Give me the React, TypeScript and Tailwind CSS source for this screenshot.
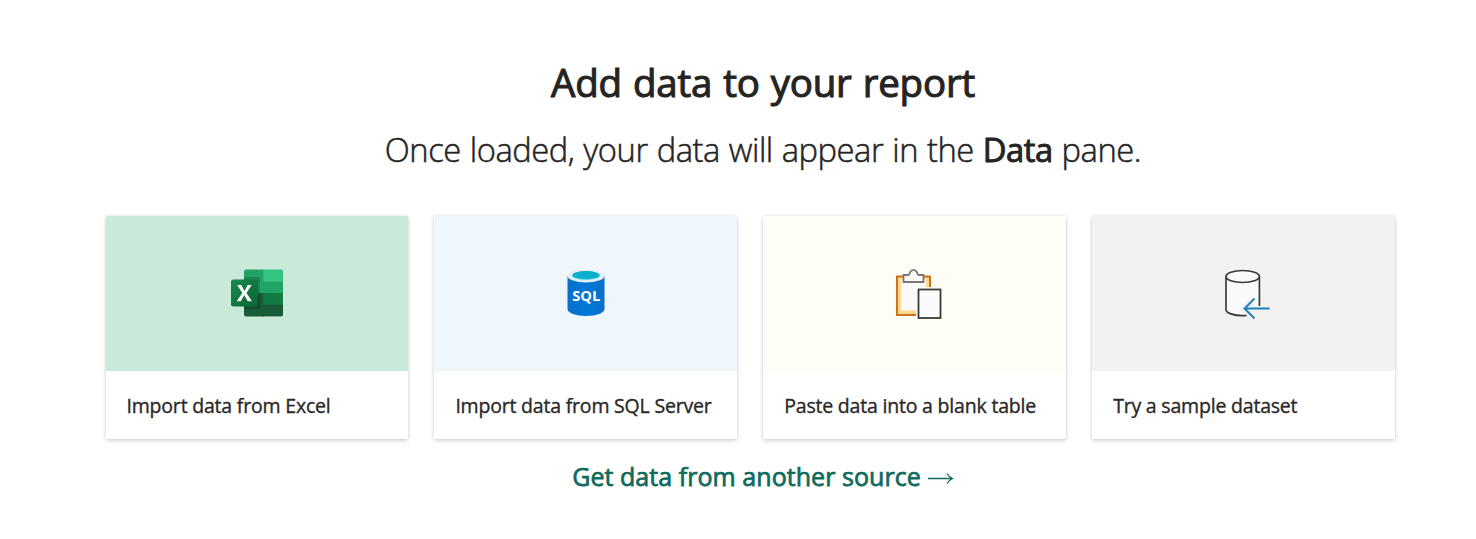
import type { ReactNode } from "react";

function ExcelIcon() {
  return (
    <svg width="54" height="48" viewBox="0 0 54 48" className="block">
      <defs>
        <clipPath id="sheet">
          <rect x="14" y="0.5" width="39" height="47" rx="2" />
        </clipPath>
        <linearGradient id="badge" x1="0" y1="0" x2="1" y2="1">
          <stop offset="0" stopColor="#18884f" />
          <stop offset="1" stopColor="#0b6631" />
        </linearGradient>
      </defs>
      <g clipPath="url(#sheet)">
        <rect x="14" y="0" width="20" height="24" fill="#21a366" />
        <rect x="33.3" y="0" width="20" height="12.5" fill="#33c481" />
        <rect x="33.3" y="12.3" width="20" height="12" fill="#21a366" />
        <rect x="14" y="24" width="20" height="24" fill="#185c37" />
        <rect x="33.3" y="24" width="20" height="12" fill="#107c41" />
        <rect x="33.3" y="35.8" width="20" height="12" fill="#185c37" />
        <path d="M14 8H27.5Q30 8 30 10.500V37.500Q30 40 27.500 40H14Z" fill="#000" opacity=".18" />
      </g>
      <rect x="1" y="10.500" width="27" height="27" rx="2" fill="url(#badge)" />
      <path
        d="M6.700 32.200L12.300 24L7.200 16.100H11.300L14.500 21.900L17.700 16.100H21.600L16.500 24.100L21.900 32.200H17.800L14.200 26.200L10.700 32.200Z"
        fill="#fff"
      />
    </svg>
  );
}

function SqlIcon() {
  return (
    <svg width="38" height="48" viewBox="0 0 38 48" className="block">
      <defs>
        <linearGradient id="drum" x1="0" x2="1">
          <stop offset="0" stopColor="#0a6fcb" />
          <stop offset=".5" stopColor="#0078d7" />
          <stop offset="1" stopColor="#0a6fcb" />
        </linearGradient>
      </defs>
      <path d="M0.500 7V40C0.500 44 8.800 47 19 47S37.500 44 37.500 40V7Z" fill="url(#drum)" />
      <ellipse cx="19" cy="7" rx="18.500" ry="6.500" fill="#e4eef8" />
      <ellipse cx="19" cy="6.500" rx="14" ry="4.300" fill="#32d4e8" />
      <ellipse cx="19" cy="6" rx="13.300" ry="3.900" fill="#0bafcb" />
      <text
        x="19.300"
        y="32"
        textAnchor="middle"
        textLength="28"
        lengthAdjust="spacingAndGlyphs"
        fill="#fff"
        className="font-['Open_Sans',sans-serif] text-[15px] font-bold"
      >
        SQL
      </text>
    </svg>
  );
}

function PasteIcon() {
  return (
    <svg width="48" height="52" viewBox="0 0 48 52" className="block">
      <rect x="2" y="8.500" width="33" height="38.500" fill="#fcd98f" stroke="#d2701b" strokeWidth="2" />
      <rect x="6" y="11" width="25" height="31.500" fill="#fafafa" />
      <path
        d="M8.500 14V7H13.500C14.500 7 14.500 5.500 15 4.300C16 2.500 17 1.900 18.500 1.900S21 2.500 22 4.300C22.500 5.500 22.500 7 23.500 7H28.500V14Z"
        fill="#fafafa"
        stroke="#797774"
        strokeWidth="1.800"
      />
      <rect x="21" y="19" width="27" height="33" fill="#fefef7" />
      <rect x="23.500" y="21.500" width="22" height="28.500" fill="#fafafa" stroke="#3a3b3a" strokeWidth="1.800" />
    </svg>
  );
}

function SampleIcon() {
  return (
    <svg width="46" height="51" viewBox="0 0 46 51" fill="none" className="block">
      <path d="M1 7.500V41C1 44 7.500 47 17.500 47L20.500 46.900L15 40L23 30L34.500 37V7.500Z" fill="#fafafa" />
      <ellipse cx="17.700" cy="7.500" rx="16.700" ry="6" fill="#fafafa" stroke="#3a3a38" strokeWidth="1.700" />
      <path
        d="M1 7.500V40.500C1 44 8.500 46.700 17.500 46.700Q19.700 46.700 21.500 46.500M34.400 7.500V37"
        stroke="#3a3a38"
        strokeWidth="1.700"
      />
      <path d="M44.500 39.500H20M29.500 29.500L19.500 39.500L29.500 49.500" stroke="#1e80b8" strokeWidth="1.900" />
    </svg>
  );
}

type CardProps = { label: string; tint: string; children: ReactNode };

function SourceCard({ label, tint, children }: CardProps) {
  return (
    <button
      type="button"
      className="flex h-[223px] flex-col overflow-hidden rounded-[1px] bg-white text-left shadow-[0_2px_4px_rgba(0,0,0,0.14),0_0_3px_rgba(0,0,0,0.12)]"
    >
      <div className={`h-[154.500px] w-full shrink-0 ${tint}`}>{children}</div>
      <div className="flex w-full flex-1 items-center pt-px pl-[21px] text-[19.500px] tracking-[-0.2px] whitespace-nowrap text-[#292827] [-webkit-text-stroke:0.35px_currentColor]">
        {label}
      </div>
    </button>
  );
}

export default function App() {
  return (
    <main className="flex h-[539px] w-[1476px] flex-col overflow-hidden bg-white pt-[56px] font-['Open_Sans','Noto_Sans',sans-serif] text-[#252423]">
      <header className="ml-[50px] flex flex-col items-center whitespace-nowrap">
        <h1 className="text-[38.500px] leading-[52px] font-normal tracking-[-0.200px] [word-spacing:1.200px] [-webkit-text-stroke:1.050px_currentColor]">
          Add data to your report
        </h1>
        <p className="mt-[19px] text-[32.700px] leading-[46px] font-light tracking-[-0.450px] [word-spacing:0.900px] [-webkit-text-stroke:0.500px_currentColor]">
          Once loaded, your data will appear in the{" "}
          <b className="font-normal [-webkit-text-stroke:0.950px_currentColor]">Data</b> pane.
        </p>
      </header>
      <section className="mt-[43px] ml-[105.500px] grid w-[1289.500px] grid-cols-4 gap-[26px]">
        <SourceCard label="Import data from Excel" tint="bg-[#c9ead8] pt-[52.500px] pl-[124.500px]">
          <ExcelIcon />
        </SourceCard>
        <SourceCard label="Import data from SQL Server" tint="bg-[#eff6fc] pt-[52.500px] pl-[132.700px]">
          <SqlIcon />
        </SourceCard>
        <SourceCard label="Paste data into a blank table" tint="bg-[#fefef6] pt-[52px] pl-[131.500px]">
          <PasteIcon />
        </SourceCard>
        <SourceCard label="Try a sample dataset" tint="bg-[#f3f2f1] pt-[53px] pl-[133px]">
          <SampleIcon />
        </SourceCard>
      </section>
      <a
        href="#"
        className="mt-[20px] ml-[50px] flex items-center justify-center gap-[7px] text-[25px] leading-[34px] tracking-[0.050px] whitespace-nowrap text-[#0f6b5c] [-webkit-text-stroke:0.750px_currentColor]"
      >
        Get data from another source
        <svg width="26" height="14" viewBox="0 0 26 14" fill="none" stroke="currentColor" strokeWidth="1.300" className="mt-[4px]">
          <path d="M0 7.500H24.500M19 2.500Q21 6 24.500 7.500Q21 9 19 12.500" />
        </svg>
      </a>
    </main>
  );
}
